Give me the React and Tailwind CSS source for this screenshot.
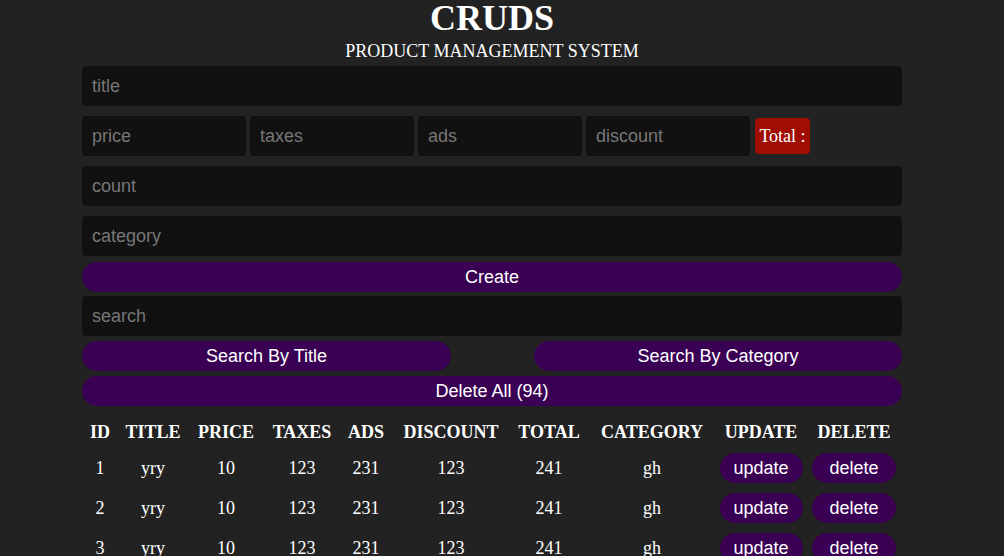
const rows = [1, 2, 3, 4, 5];

const cols = [
  ['ID', 'w-[36px]'],
  ['TITLE', 'w-[70px]'],
  ['PRICE', 'w-[76px]'],
  ['TAXES', 'w-[76px]'],
  ['ADS', 'w-[52px]'],
  ['DISCOUNT', 'w-[118px]'],
  ['TOTAL', 'w-[78px]'],
  ['CATEGORY', 'w-[128px]'],
  ['UPDATE', 'w-[90px]'],
  ['DELETE', 'w-[96px]'],
];

export default function App() {
  return (
    <div className="min-h-screen w-full bg-[#222222] text-white">
      <div className="w-[984px]">
        <div className="mx-auto w-[820px]">
          {/* Head */}
          <div className="text-center font-['Liberation_Serif',serif]">
            <h1 className="text-[36px] font-bold leading-[36px]">CRUDS</h1>
            <p className="pt-[3px] text-[18px] leading-[24px]">PRODUCT MANAGEMENT SYSTEM</p>
          </div>

          {/* Inputs */}
          <div className="mt-[3px] flex flex-col gap-[10px] font-['Liberation_Sans',sans-serif]">
            <input placeholder="title" className={inputCls('w-full')} />
            <div className="flex items-center gap-[4px]">
              <input placeholder="price" className={inputCls('w-[164px]')} />
              <input placeholder="taxes" className={inputCls('w-[164px]')} />
              <input placeholder="ads" className={inputCls('w-[164px]')} />
              <input placeholder="discount" className={inputCls('w-[164px]')} />
              <small className="ml-[1px] flex h-[36px] w-[55px] items-center justify-center rounded-[4px] bg-[#a00d02] font-['Liberation_Serif',serif] text-[18px]">
                Total :
              </small>
            </div>
            <input placeholder="count" className={inputCls('w-full')} />
            <input placeholder="category" className={inputCls('w-full')} />
          </div>
          <button className={btnCls('mt-[6px] w-full')}>Create</button>

          {/* Search */}
          <div className="mt-[4px] font-['Liberation_Sans',sans-serif]">
            <input placeholder="search" className={inputCls('w-full')} />
            <div className="mt-[5px] flex justify-between">
              <button className={btnCls('w-[369px]')}>Search By Title</button>
              <button className={btnCls('w-[368px]')}>Search By Category</button>
            </div>
          </div>
          <button className={btnCls('mt-[5px] w-full')}>Delete All (94)</button>

          {/* Table */}
          <table className="mt-[10px] w-full table-fixed text-center font-['Liberation_Serif',serif] text-[18px]">
            <thead>
              <tr>
                {cols.map(([h, w]) => (
                  <th key={h} className={`${w} px-0 py-[5px] font-bold leading-[22px]`}>{h}</th>
                ))}
              </tr>
            </thead>
            <tbody>
              {rows.map((i) => (
                <tr key={i}>
                  <td className="py-[5px]">{i}</td>
                  <td className="py-[5px]">yry</td>
                  <td className="py-[5px]">10</td>
                  <td className="py-[5px]">123</td>
                  <td className="py-[5px]">231</td>
                  <td className="py-[5px]">123</td>
                  <td className="py-[5px]">241</td>
                  <td className="py-[5px]">gh</td>
                  <td className="py-[5px]">
                    <button className="h-[30px] w-[83px] rounded-full bg-[#390053] font-['Liberation_Sans',sans-serif] text-[18px]">update</button>
                  </td>
                  <td className="py-[5px]">
                    <button className="h-[30px] w-[84px] rounded-full bg-[#390053] font-['Liberation_Sans',sans-serif] text-[18px]">delete</button>
                  </td>
                </tr>
              ))}
            </tbody>
          </table>
        </div>
      </div>
    </div>
  );
}

function inputCls(extra) {
  return `${extra} h-[40px] rounded-[4px] bg-[#111111] px-[10px] text-[18px] text-white outline-none placeholder:text-[#777777]`;
}

function btnCls(extra) {
  return `${extra} block h-[30px] rounded-full bg-[#390053] font-['Liberation_Sans',sans-serif] text-[18px] text-white`;
}
